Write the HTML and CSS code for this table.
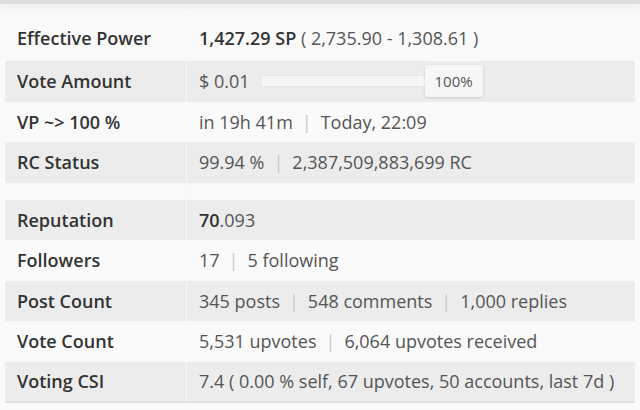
FILE: index.html
```html
<!DOCTYPE html>
<html>
<head>
<meta charset="utf-8">
<link rel="stylesheet" href="styles.css">
</head>
<body>
<div class="topbar"></div>
<div class="wrap">
<table class="stats">
  <tbody>
    <tr class="first">
      <th>Effective Power</th>
      <td><b>1,427.29 SP</b> ( 2,735.90 - 1,308.61 )</td>
    </tr>
    <tr class="alt">
      <th>Vote Amount</th>
      <td>
        <div class="vote">
          <span>$ 0.01</span>
          <div class="slider"><div class="track"></div><div class="tip">100%</div></div>
        </div>
      </td>
    </tr>
    <tr>
      <th>VP ~&gt; 100 %</th>
      <td>in 19h 41m<span class="sep">|</span>Today, 22:09</td>
    </tr>
    <tr class="alt">
      <th>RC Status</th>
      <td>99.94 %<span class="sep">|</span>2,387,509,883,699 RC</td>
    </tr>
    <tr class="spacer"><th></th><td></td></tr>
    <tr class="alt">
      <th>Reputation</th>
      <td><b>70</b>.093</td>
    </tr>
    <tr>
      <th>Followers</th>
      <td>17<span class="sep">|</span>5 following</td>
    </tr>
    <tr class="alt">
      <th>Post Count</th>
      <td>345 posts<span class="sep">|</span>548 comments<span class="sep">|</span>1,000 replies</td>
    </tr>
    <tr>
      <th>Vote Count</th>
      <td>5,531 upvotes<span class="sep">|</span>6,064 upvotes received</td>
    </tr>
    <tr class="alt">
      <th>Voting CSI</th>
      <td>7.4 ( 0.00 % self, 67 upvotes, 50 accounts, last 7d )</td>
    </tr>
  </tbody>
</table>
</div>
</body>
</html>
```

FILE: styles.css
```css
html, body {
  margin: 0;
  padding: 0;
  background: #fafafa;
  width: 640px;
  height: 410px;
  overflow: hidden;
}
body {
  font-family: "Open Sans", "Noto Sans", sans-serif;
  font-size: 18px;
  color: #555;
}
.topbar {
  height: 4px;
  background: #dedede;
  box-shadow: 0 3px 6px rgba(0,0,0,0.08);
  margin-bottom: 11px;
}
.wrap {
  padding-left: 5px;
}
.stats {
  border-collapse: collapse;
  width: 630px;
  border-bottom: 2px solid #e2e2e2;
}
.stats tr {
  background: #fafafa;
  height: 40.5px;
}
.stats tr.first { height: 46px; }
.stats tr.alt { background: #ececec; }
.stats tr.spacer { height: 17px; background: #f9f9f9; }
.stats th {
  width: 169px;
  text-align: left;
  font-weight: 600;
  color: #333;
  padding: 0 0 0 12px;
  border-right: 1px solid #f8f8f8;
  white-space: nowrap;
}
.stats td {
  padding: 0 0 0 12px;
  white-space: nowrap;
}
.stats td b { font-weight: 600; color: #333; }
.sep {
  color: #c8c8c8;
  margin: 0 9px;
}
.vote {
  display: flex;
  align-items: center;
}
.slider {
  display: flex;
  align-items: center;
  margin-left: 12px;
}
.track {
  width: 163px;
  height: 10px;
  background: #f6f6f6;
  border-top: 1px dotted #d8d8d8;
  border-bottom: 1px dotted #d8d8d8;
}
.tip {
  width: 58px;
  height: 32px;
  box-sizing: border-box;
  background: #f7f7f7;
  border-radius: 3px;
  box-shadow: 0 1px 3px rgba(0,0,0,0.15);
  font-size: 15px;
  color: #555;
  display: flex;
  align-items: center;
  justify-content: center;
}
```
